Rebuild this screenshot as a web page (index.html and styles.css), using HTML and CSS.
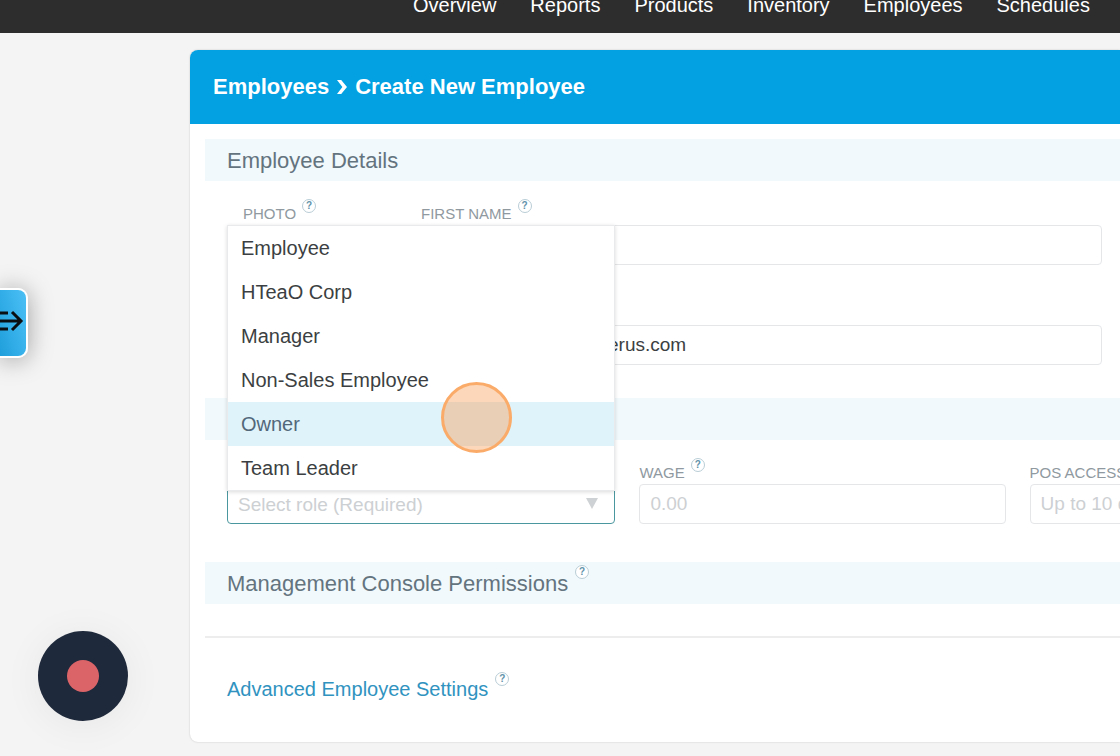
FILE: index.html
```html
<!DOCTYPE html>
<html lang="en">
<head>
  <meta charset="UTF-8">
  <meta name="viewport" content="width=device-width, initial-scale=1.0">
  <title>Create New Employee</title>
  <link rel="stylesheet" href="styles.css">
</head>
<body>
  <nav class="navbar">
    <a href="#">Overview</a>
    <a href="#">Reports</a>
    <a href="#">Products</a>
    <a href="#">Inventory</a>
    <a href="#">Employees</a>
    <a href="#">Schedules</a>
  </nav>

  <main class="card">
    <h1 class="card-header">
      <a href="#">Employees</a>
      <svg class="chevron" width="10" height="16" viewBox="0 0 10 16"><path d="M0 1h4.2L10 8 4.2 15H0l5.4-7z" fill="#fff"/></svg>
      <span>Create New Employee</span>
    </h1>

    <form class="card-body">
      <h2 class="section-title">Employee Details</h2>
      <div class="fields">
        <div class="row row-name">
          <div class="field photo">
            <div class="label">PHOTO <button type="button" class="help">?</button></div>
          </div>
          <div class="field">
            <div class="label"><label for="firstName">FIRST NAME</label> <button type="button" class="help">?</button></div>
            <input type="text" id="firstName" class="input">
          </div>
        </div>
        <div class="row row-email">
          <input type="email" class="input" value="erus.com" aria-label="Email">
        </div>
      </div>

      <div class="section-title"></div>
      <div class="fields row row-role">
        <div class="field role">
          <div class="label"></div>
          <select id="role" class="input select" aria-label="Role" required>
            <option value="">Select role (Required)</option>
          </select>
          <svg class="arrow" width="12" height="11" viewBox="0 0 12 11"><path d="M0 0h12L6 11z" fill="#cfd2d4"/></svg>
          <ul class="menu" role="listbox" aria-label="Role">
            <li role="option">Employee</li>
            <li role="option">HTeaO Corp</li>
            <li role="option">Manager</li>
            <li role="option">Non-Sales Employee</li>
            <li role="option" class="active" aria-selected="true">Owner</li>
            <li role="option">Team Leader</li>
          </ul>
        </div>
        <div class="field wage">
          <div class="label"><label for="wage">WAGE</label> <button type="button" class="help">?</button></div>
          <input type="text" id="wage" class="input" placeholder="0.00">
        </div>
        <div class="field wage">
          <div class="label"><label for="pos">POS ACCESS CODE</label></div>
          <input type="text" id="pos" class="input" placeholder="Up to 10 digits">
        </div>
      </div>

      <h2 class="section-title permissions">Management Console Permissions <button type="button" class="help">?</button></h2>
      <div class="advanced">
        <a href="#">Advanced Employee Settings</a>
        <button type="button" class="help">?</button>
      </div>
    </form>
  </main>

  <!-- Floating controls -->
  <button class="side-tab" aria-label="Open panel">
    <svg width="24" height="22" viewBox="0 0 24 22" fill="none" stroke="#0a0f14" stroke-width="3"><path d="M0 11h21M0 3h8M0 19h8M12 2l9 9-9 9"/></svg>
  </button>
  <button class="record" aria-label="Record"><span class="record-dot"></span></button>
  <div class="click-marker"></div>
</body>
</html>
```
FILE: styles.css
```css
* {
  box-sizing: border-box;
}
body {
  margin: 0;
  min-height: 100vh;
  position: relative;
  overflow: hidden;
  background-color: #f4f4f4;
  font-family: "Liberation Sans", Arial, sans-serif;
  color: #3c3f42;
}
a {
  color: inherit;
  text-decoration: none;
}
button {
  padding: 0;
  font-family: inherit;
  cursor: pointer;
}

/* Top navigation */
.navbar {
  display: flex;
  align-items: flex-end;
  gap: 34px;
  height: 33px;
  padding: 0 0 17px 413px;
  overflow: hidden;
  background-color: #2d2d2d;
  color: #fff;
  font-size: 20px;
  line-height: 22px;
}

/* Card */
.card {
  margin: 17px 0 0 190px;
  background-color: #fff;
  border-radius: 8px 0 0 8px;
  box-shadow: 0 0 2px rgba(0, 0, 0, 0.2);
}
.card-header {
  display: flex;
  align-items: center;
  gap: 8px;
  height: 74px;
  margin: 0;
  padding-left: 23px;
  border-radius: 8px 0 0 0;
  background-color: #03a1e2;
  color: #fff;
  font-size: 22px;
}
.card-body {
  padding: 15px 0 0 15px;
  overflow: hidden;
}
.section-title {
  display: flex;
  align-items: center;
  gap: 7px;
  height: 42px;
  margin: 0;
  padding: 2px 0 0 22px;
  background-color: #f1f9fc;
  color: #64747f;
  font-size: 22px;
  font-weight: normal;
}
.fields {
  padding: 20px 0 33px 22px;
}
.row {
  display: flex;
}
.row-name {
  padding-right: 18px;
}
.row-name .field:last-child {
  flex: 1;
}
.photo {
  width: 194px;
  padding-left: 16px;
}
.row-email {
  padding: 60px 18px 0 370px;
}
.row-role {
  gap: 24px;
  padding-bottom: 38px;
}
.role {
  position: relative;
  flex: 0 0 43.5%;
}
.wage {
  flex: 0 0 41%;
}
.label {
  display: flex;
  align-items: center;
  gap: 6px;
  height: 24px;
  color: #8f999f;
  font-size: 15px;
  white-space: nowrap;
}
.help {
  align-self: flex-start;
  flex: none;
  width: 14px;
  height: 14px;
  margin-top: -2px;
  border: 1px solid #b9cdd6;
  border-radius: 50%;
  background-color: #fff;
  color: #6292aa;
  font-size: 10px;
  font-weight: bold;
  line-height: 12px;
}
.permissions .help {
  margin-top: 1px;
}

/* Inputs */
.input {
  display: block;
  width: 100%;
  height: 40px;
  padding: 0 10px;
  border: 1px solid #e4e6e8;
  border-radius: 4px;
  background-color: #fff;
  color: #3c3f42;
  font-family: inherit;
  font-size: 19px;
}
.input::placeholder {
  color: #cdd0d3;
}
.select {
  appearance: none;
  border-color: #4b979f;
  color: #cdd0d3;
}
.arrow {
  position: absolute;
  right: 17px;
  bottom: 15px;
}

/* Role dropdown */
.menu {
  position: absolute;
  left: 0;
  right: 0;
  bottom: 33px;
  margin: 0;
  padding: 0;
  border: 1px solid #e8eaeb;
  background-color: #fff;
  box-shadow: 0 1px 4px rgba(0, 0, 0, 0.15);
  list-style: none;
  font-size: 20px;
  line-height: 44px;
}
.menu li {
  padding-left: 13px;
}
.menu .active {
  background-color: #dff3fa;
  color: #52687a;
}

.advanced {
  display: flex;
  gap: 7px;
  margin-top: 32px;
  padding: 36px 0 38px 22px;
  border-top: 2px solid #ededee;
  color: #3093bf;
  font-size: 20px;
  line-height: 30px;
}

/* Floating controls */
.side-tab {
  position: absolute;
  left: 0;
  top: 288px;
  display: flex;
  align-items: center;
  width: 28px;
  height: 70px;
  border: 2px solid #fff;
  border-left: 0;
  border-radius: 0 10px 10px 0;
  background: linear-gradient(75deg, #1f9fdc, #4cc0f6);
  box-shadow: 0 2px 24px rgba(0, 0, 0, 0.35);
}
.side-tab svg {
  flex: none;
  margin-bottom: 4px;
}
.record {
  position: absolute;
  left: 38px;
  top: 631px;
  display: flex;
  align-items: center;
  justify-content: center;
  width: 90px;
  height: 90px;
  border: 0;
  border-radius: 50%;
  background-color: #1e293b;
  box-shadow: 0 4px 40px rgba(0, 0, 0, 0.06);
}
.record-dot {
  width: 32px;
  height: 32px;
  border-radius: 50%;
  background-color: #da6468;
}
.click-marker {
  position: absolute;
  left: 441px;
  top: 382px;
  width: 71px;
  height: 71px;
  border: 3px solid #fbab69;
  border-radius: 50%;
  background-color: rgba(247, 151, 71, 0.38);
  pointer-events: none;
}
```
